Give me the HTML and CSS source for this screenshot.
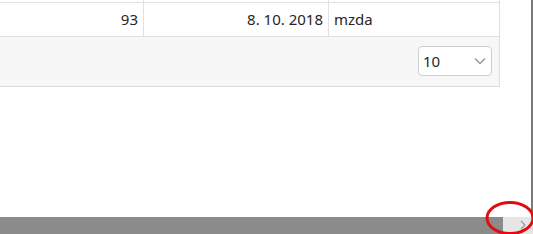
FILE: index.html
```html
<!DOCTYPE html>
<html lang="cs">
<head>
  <meta charset="UTF-8" />
  <title>Platby</title>
  <link rel="stylesheet" href="styles.css">
</head>
<body>

<div class="viewport">
  <div class="content">
    <div class="grid-wrap">
      <table class="grid">
        <tr class="prev">
          <td class="c1"></td><td class="c2"></td><td class="c3"></td>
        </tr>
        <tr>
          <td class="c1 num">93</td>
          <td class="c2 num">8. 10. 2018</td>
          <td class="c3">mzda</td>
        </tr>
      </table>
      <div class="pager">
        <div class="page-size">
          <span>10</span>
          <svg width="12" height="8" viewBox="0 0 12 8"><polyline points="1,1.5 6,6.5 11,1.5" fill="none" stroke="#888" stroke-width="1.1"/></svg>
        </div>
      </div>
    </div>
  </div>

  <div class="hscroll">
    <div class="thumb"></div>
    <div class="track">
      <svg class="arrow" width="6" height="10" viewBox="0 0 6 10"><polyline points="1,1 5,5 1,9" fill="none" stroke="#9a9a9a" stroke-width="1.2"/></svg>
    </div>
  </div>

  <svg class="mark" width="533" height="234" viewBox="0 0 533 234">
    <ellipse cx="510" cy="218" rx="23" ry="15.5" fill="none" stroke="#e10d0d" stroke-width="3"/>
  </svg>
</div>

</body>
</html>
```

FILE: styles.css
```css
body {
  margin: 0;
  font-family: "Noto Sans", "Open Sans", "DejaVu Sans", sans-serif;
  color: #262626;
  background: #fff;
}

.viewport {
  position: relative;
  width: 533px;
  height: 234px;
  overflow: hidden;
  display: flex;
  flex-direction: column;
}

.content {
  flex: 1;
  border-right: 2px solid #7b7b7b;
}

.grid-wrap {
  width: 499px;
  border-right: 1px solid #dedede;
}

.grid {
  width: 100%;
  border-collapse: collapse;
  font-size: 15px;
}

.grid td {
  border-bottom: 1px solid #e2e2e2;
  border-left: 1px solid #e2e2e2;
  padding: 5px 5px 5px 5px;
  height: 23px;
  line-height: 23px;
}

.grid td.c1 {
  border-left: none;
  width: 133px;
}

.grid td.c2 {
  width: 174px;
}

.grid .prev td {
  height: 2px;
  padding: 0;
  line-height: 2px;
}

.num {
  text-align: right;
}

.pager {
  background: #f7f7f7;
  border-bottom: 1px solid #dcdcdc;
  height: 50px;
  display: flex;
  justify-content: flex-end;
  padding: 9px 7px 0 0;
  box-sizing: border-box;
}

.page-size {
  width: 74px;
  height: 30px;
  box-sizing: border-box;
  border: 1px solid #cfcfcf;
  border-radius: 4px;
  background: #fff;
  display: flex;
  align-items: center;
  justify-content: space-between;
  padding: 0 5px 0 4px;
  font-size: 15px;
}

.hscroll {
  height: 17px;
  display: flex;
}

.thumb {
  width: 503px;
  background: #8b8b8b;
}

.track {
  flex: 1;
  background: #e6e6e6;
  position: relative;
}

.arrow {
  position: absolute;
  right: 7px;
  top: 3px;
}

.mark {
  position: absolute;
  left: 0;
  top: 0;
}
```
